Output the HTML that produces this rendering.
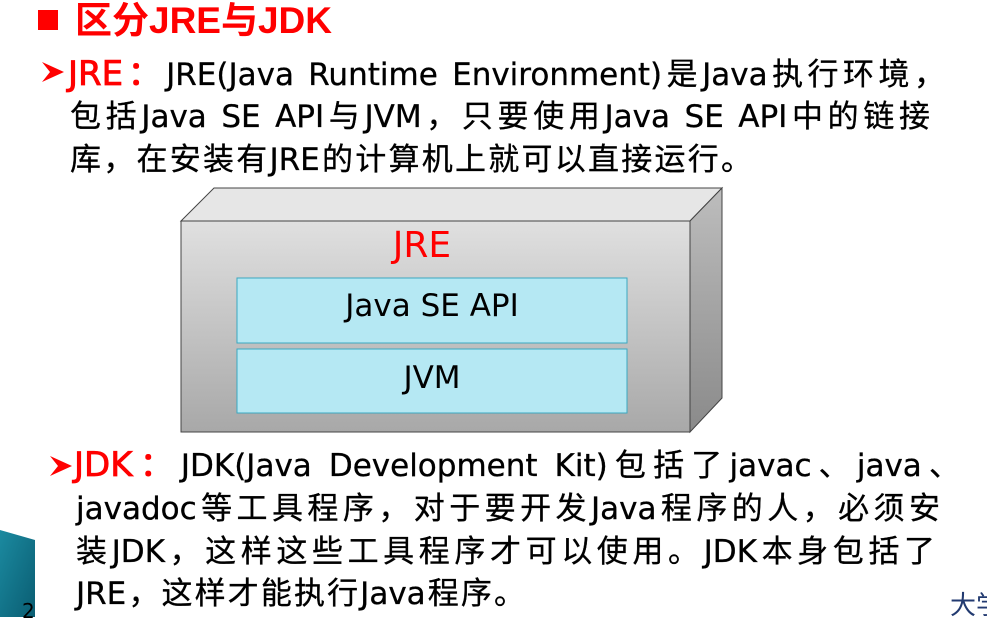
<!DOCTYPE html>
<html><head><meta charset="utf-8"><style>
body{margin:0;width:987px;height:617px;overflow:hidden;background:#fff;position:relative;font-family:"DejaVu Sans","Noto Sans CJK SC",sans-serif}
.t{position:absolute;white-space:nowrap;color:#000;font-size:31px;line-height:42px;-webkit-text-stroke:0.3px #000}
.j{text-align:justify;text-align-last:justify;white-space:normal;overflow:visible}
.r{color:#f00;-webkit-text-stroke:0.8px #f00;font-size:34px}
</style></head><body>
<svg width="987" height="617" style="position:absolute;left:0;top:0">
<defs>
<linearGradient id="f" x1="0" y1="0" x2="0" y2="1"><stop offset="0" stop-color="#e0e0e0"/><stop offset="1" stop-color="#a8a8a8"/></linearGradient>
<linearGradient id="s" x1="0" y1="0" x2="0" y2="1"><stop offset="0" stop-color="#bdbdbd"/><stop offset="1" stop-color="#8a8a8a"/></linearGradient>
<linearGradient id="tl" x1="0" y1="0" x2="1" y2="1"><stop offset="0" stop-color="#1b8aa0"/><stop offset="1" stop-color="#0a5d72"/></linearGradient>
</defs>
<polygon points="181,221 214,188 722,188 690,221" fill="#e6e6e6" stroke="#444" stroke-width="1"/>
<polygon points="690,221 722,188 722,398 690,432" fill="url(#s)" stroke="#444" stroke-width="1"/>
<rect x="181" y="221" width="509" height="211" fill="url(#f)" stroke="#444" stroke-width="1"/>
<rect x="237" y="278" width="390" height="65" fill="#b5e8f3" stroke="#3aa8c0" stroke-width="1"/>
<rect x="237" y="349" width="390" height="64" fill="#b5e8f3" stroke="#3aa8c0" stroke-width="1"/>
<polygon points="0,530 35,540 35,617 0,617" fill="url(#tl)"/>
<polygon points="42,62 64,72 42,82 50,72" fill="#f00"/>
<polygon points="50,456 72,466 50,476 58,466" fill="#f00"/>
<rect x="38" y="10" width="20" height="20" fill="#f00"/>
</svg>
<div class="t" style="left:75px;top:0px;font-size:37px;font-weight:bold;color:#f00;-webkit-text-stroke:0;font-family:'Liberation Sans','Noto Sans CJK SC',sans-serif">区分JRE与JDK</div>
<div class="t j" style="left:68px;top:53px;width:877px"><span class="r">JRE：</span>JRE(Java Runtime Environment)是Java执行环境，</div>
<div class="t j" style="left:70px;top:96px;width:860px">包括Java SE API与JVM，只要使用Java SE API中的链接</div>
<div class="t j" style="left:70px;top:139px;width:682px">库，在安装有JRE的计算机上就可以直接运行。</div>
<div class="t" style="left:382px;top:225px;font-size:36px;width:80px;text-align:center;color:#f00;-webkit-text-stroke:0">JRE</div>
<div class="t" style="left:237px;width:390px;text-align:center;top:285px;-webkit-text-stroke:0">Java SE API</div>
<div class="t" style="left:237px;width:390px;text-align:center;top:357px;-webkit-text-stroke:0">JVM</div>
<div class="t j" style="left:74px;top:444px;width:886px"><span class="r">JDK：</span>JDK(Java Development Kit)包括了javac、java、</div>
<div class="t j" style="left:76px;top:488px;width:864px">javadoc等工具程序，对于要开发Java程序的人，必须安</div>
<div class="t j" style="left:76px;top:531px;width:859px">装JDK，这样这些工具程序才可以使用。JDK本身包括了</div>
<div class="t j" style="left:76px;top:573px;width:449px">JRE，这样才能执行Java程序。</div>
<div class="t" style="left:22px;top:590px;font-size:20px;-webkit-text-stroke:0">2</div>
<div class="t" style="left:950px;top:585px;font-size:26px;color:#223a70;-webkit-text-stroke:0">大学</div>
</body></html>
